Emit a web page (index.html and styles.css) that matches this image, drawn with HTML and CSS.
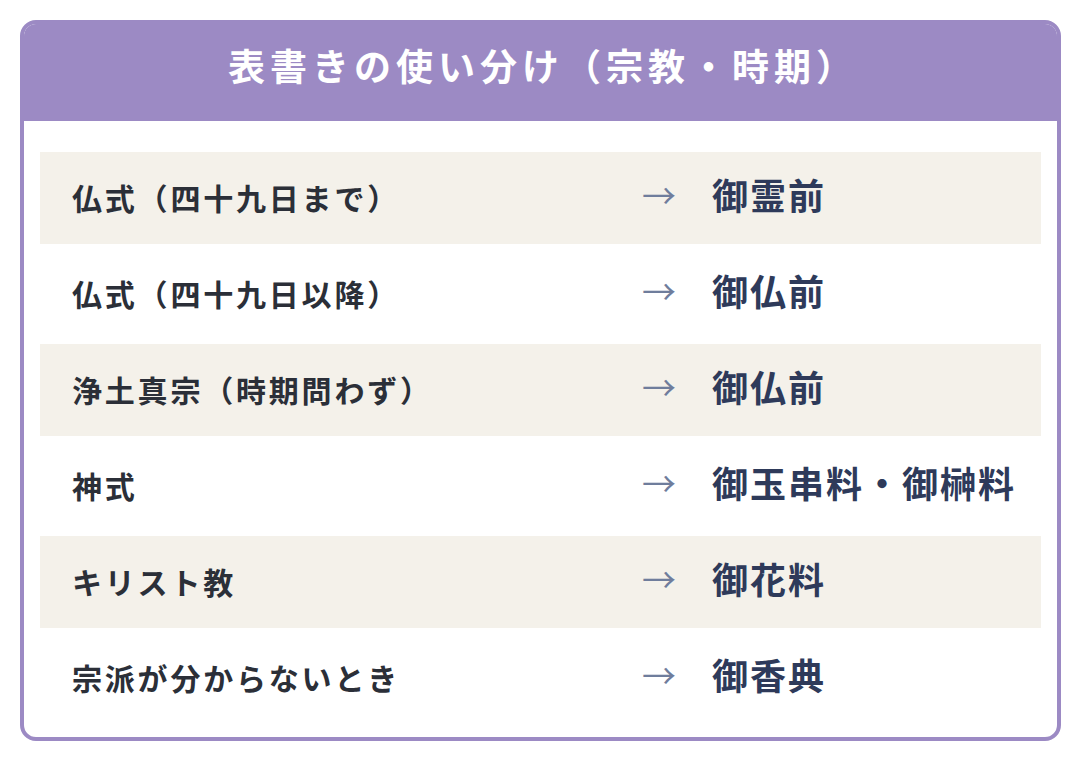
FILE: index.html
```html
<!DOCTYPE html>
<html lang="ja">
<head>
<meta charset="utf-8">
<title>表書きの使い分け</title>
<link rel="stylesheet" href="styles.css">
</head>
<body>
  <section class="card">
    <h1 class="card-title">表書きの使い分け（宗教・時期）</h1>
    <div class="rows">
      <div class="row alt">
        <span class="label">仏式（四十九日まで）</span>
        <span class="arrow">→</span>
        <span class="result">御霊前</span>
      </div>
      <div class="row">
        <span class="label">仏式（四十九日以降）</span>
        <span class="arrow">→</span>
        <span class="result">御仏前</span>
      </div>
      <div class="row alt">
        <span class="label">浄土真宗（時期問わず）</span>
        <span class="arrow">→</span>
        <span class="result">御仏前</span>
      </div>
      <div class="row">
        <span class="label">神式</span>
        <span class="arrow">→</span>
        <span class="result">御玉串料・御榊料</span>
      </div>
      <div class="row alt">
        <span class="label">キリスト教</span>
        <span class="arrow">→</span>
        <span class="result">御花料</span>
      </div>
      <div class="row">
        <span class="label">宗派が分からないとき</span>
        <span class="arrow">→</span>
        <span class="result">御香典</span>
      </div>
    </div>
  </section>
</body>
</html>
```

FILE: styles.css
```css
html, body {
  margin: 0;
  padding: 0;
  background: #ffffff;
}

body {
  padding: 20px 0 0 20px;
  font-family: "Noto Sans CJK JP", "Noto Sans", sans-serif;
}

.card {
  box-sizing: border-box;
  width: 1041px;
  height: 721px;
  border: 4px solid #9c8ac4;
  border-radius: 16px;
  overflow: hidden;
  background: #ffffff;
}

.card-title {
  margin: 0;
  height: 97px;
  padding: 0 0 16px 5px;
  box-sizing: border-box;
  background: #9c8ac4;
  color: #ffffff;
  font-size: 37px;
  font-weight: 700;
  letter-spacing: 5px;
  display: flex;
  align-items: center;
  justify-content: center;
}

.rows {
  display: flex;
  flex-direction: column;
  gap: 4px;
  padding: 31px 16px 13px;
}

.row {
  height: 92px;
  display: grid;
  grid-template-columns: 1fr 72px 297px;
  align-items: center;
  padding: 0 32px;
}

.row.alt {
  background: #f4f1ea;
}

.label {
  font-size: 30px;
  font-weight: 700;
  color: #2b2f38;
  letter-spacing: 2.8px;
  padding-bottom: 2px;
}

.arrow {
  font-size: 34px;
  font-weight: 400;
  color: #6f7d9c;
  padding: 0 0 8px 2px;
}

.result {
  font-size: 36px;
  font-weight: 700;
  color: #2e3a5a;
  letter-spacing: 2px;
  white-space: nowrap;
  padding-bottom: 8px;
}
```
